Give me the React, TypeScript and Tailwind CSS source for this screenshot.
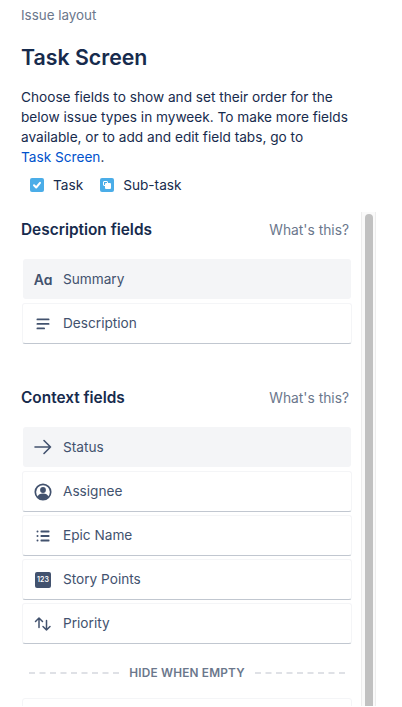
import type { ReactNode } from "react";

const Rows = {
  summary: (
    <span className="text-[14px] font-semibold tracking-[-0.3px] text-[#42526e]">Aɑ</span>
  ),
  description: (
    <svg width="16" height="16" viewBox="0 0 16 16" fill="#42526e">
      <rect x="1.500" y="2.500" width="13" height="1.800" rx="0.900" />
      <rect x="1.500" y="7" width="13" height="1.800" rx="0.900" />
      <rect x="1.500" y="11.500" width="8.500" height="1.800" rx="0.900" />
    </svg>
  ),
  status: (
    <svg width="18" height="18" viewBox="0 0 18 18" fill="none" stroke="#42526e" strokeWidth="1.600" strokeLinecap="round" strokeLinejoin="round">
      <path d="M1 9h15.500M10 2.500 16.500 9 10 15.500" />
    </svg>
  ),
  assignee: (
    <svg width="18" height="18" viewBox="0 0 18 18">
      <circle cx="9" cy="9" r="7.700" fill="#fff" stroke="#42526e" strokeWidth="1.700" />
      <circle cx="9" cy="7" r="2.900" fill="#42526e" />
      <path d="M3.600 14c.6-2.400 2.600-3.400 5.400-3.400s4.800 1 5.400 3.400A7.500 7.500 0 0 1 9 16.500 7.500 7.500 0 0 1 3.600 14z" fill="#42526e" />
    </svg>
  ),
  epic: (
    <svg width="16" height="16" viewBox="0 0 16 16" fill="#42526e">
      <rect x="1.500" y="2.500" width="2" height="2" rx="1" />
      <rect x="1.500" y="7" width="2" height="2" rx="1" />
      <rect x="1.500" y="11.500" width="2" height="2" rx="1" />
      <rect x="5.500" y="2.600" width="9" height="1.800" rx="0.600" />
      <rect x="5.500" y="7.100" width="9" height="1.800" rx="0.600" />
      <rect x="5.500" y="11.600" width="9" height="1.800" rx="0.600" />
    </svg>
  ),
  points: (
    <span className="flex h-4 w-4 items-center justify-center rounded-[2px] bg-[#42526e] text-[7px] font-semibold leading-none text-white">123</span>
  ),
  priority: (
    <svg width="18" height="18" viewBox="0 0 18 18" fill="none" stroke="#42526e" strokeWidth="1.500" strokeLinecap="round" strokeLinejoin="round">
      <path d="M5 12.500V3.500M1.500 6.500 5 3l3.500 3.500M12.500 5.500v9.500M9 11.500l3.500 3.500 3.500-3.500" />
    </svg>
  ),
};

function Row({ icon, label, active }: { icon: ReactNode; label: string; active?: boolean }) {
  return (
    <div
      className={`flex items-center rounded-[3px] ${
        active
          ? "mx-px mb-px h-10 bg-[#f4f5f7]"
          : "h-[41px] border border-[#f4f5f7] border-b-[#c1c7d0] bg-white"
      }`}
    >
      <div className="flex w-10 shrink-0 justify-center">{icon}</div>
      <span className="text-[13.65px] text-[#42526e]">{label}</span>
    </div>
  );
}

function Section({ title, children }: { title: string; children: ReactNode }) {
  return (
    <section>
      <div className="flex items-center justify-between pr-[3px]">
        <h2 className="text-[15.4px] font-semibold leading-5 text-[#172b4d]">{title}</h2>
        <span className="text-[13.8px] leading-5 text-[#6b778c]">What's this?</span>
      </div>
      <div className="mt-[19px] flex flex-col gap-[3px] pl-px">{children}</div>
    </section>
  );
}

export default function App() {
  return (
    <div className="h-[707px] overflow-hidden bg-white font-['Inter',sans-serif]">
      <div className="px-[21px] pt-[5px]">
        <p className="text-[13.4px] leading-5 text-[#6b778c]">Issue layout</p>
        <h1 className="mt-[18px] text-[21.3px] font-semibold leading-7 text-[#172b4d]">Task Screen</h1>
        <p className="mt-[16px] text-[13.65px] leading-5 text-[#172b4d]">
          Choose fields to show and set their order for the<br />
          below issue types in myweek. To make more fields<br />
          available, or to add and edit field tabs, go to<br />
          <span className="text-[#0052cc]">Task Screen</span>.
        </p>
        <div className="mt-2 flex h-5 items-center pl-[9px] text-[13.65px] text-[#172b4d]">
          <span className="flex h-[14px] w-[14px] items-center justify-center rounded-[2px] bg-[#4bade8]">
            <svg width="10" height="10" viewBox="0 0 10 10" fill="none" stroke="#fff" strokeWidth="2" strokeLinecap="round" strokeLinejoin="round">
              <path d="M2 5.200 4.200 7.500 8 2.800" />
            </svg>
          </span>
          <span className="ml-[9px]">Task</span>
          <span className="relative ml-[17px] h-[14px] w-[14px] rounded-[2px] bg-[#4bade8]">
            <span className="absolute left-[3px] top-[3px] h-[5px] w-[5px] rounded-[1px] border border-white bg-[#4bade8]" />
            <span className="absolute left-[5px] top-[5px] h-[6px] w-[6px] rounded-[1px] bg-white" />
          </span>
          <span className="ml-[9px]">Sub-task</span>
        </div>
      </div>
      <div className="mt-[17px] flex h-[494px] pl-[21px]">
        <div className="w-[331px] shrink-0 overflow-hidden pt-2">
          <Section title="Description fields">
            <Row icon={Rows.summary} label="Summary" active />
            <Row icon={Rows.description} label="Description" />
          </Section>
          <div className="mt-[44px]">
            <Section title="Context fields">
              <Row icon={Rows.status} label="Status" active />
              <Row icon={Rows.assignee} label="Assignee" />
              <Row icon={Rows.epic} label="Epic Name" />
              <Row icon={Rows.points} label="Story Points" />
              <Row icon={Rows.priority} label="Priority" />
            </Section>
          </div>
          <div className="mt-[21px] flex items-center gap-[10px] pl-2 pr-[7px]">
            <div className="flex-1 border-t-2 border-dashed border-[#dfe1e6]" />
            <span className="text-[11.8px] font-semibold leading-4 tracking-[0.2px] text-[#6b778c]">HIDE WHEN EMPTY</span>
            <div className="flex-1 border-t-2 border-dashed border-[#dfe1e6]" />
          </div>
          <div className="ml-px mt-[17px] h-10 rounded-[3px] border border-[#f4f5f7]" />
        </div>
        <div className="ml-[9px] flex w-[15px] justify-center border-x border-[#ededed] bg-[#fafafa] pt-[2px]">
          <div className="h-full w-2 rounded-t-[4px] bg-[#c1c1c1]" />
        </div>
      </div>
    </div>
  );
}
